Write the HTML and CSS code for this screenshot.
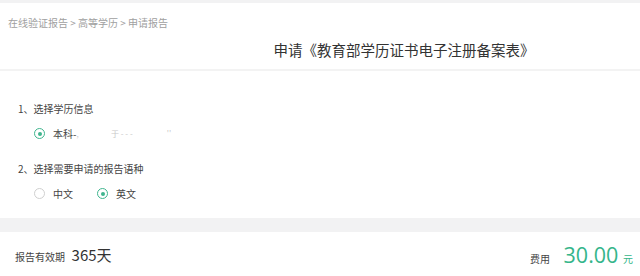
FILE: index.html
```html
<!DOCTYPE html>
<html lang="zh-CN">
<head>
    <meta charset="UTF-8">
    <meta name="viewport" content="width=device-width, initial-scale=1.0">
    <title>申请报告</title>
    <link rel="stylesheet" href="styles.css">
</head>
<body>

<div class="header">
    <div class="crumbs">在线验证报告 &gt; 高等学历 &gt; 申请报告</div>
    <h1 class="title">申请《教育部学历证书电子注册备案表》</h1>
</div>

<div class="main">
    <div class="step">1、选择学历信息</div>
    <div class="options">
        <label class="radio checked"><span class="dot"></span>本科-<span class="blur">,&nbsp;&nbsp;&nbsp;&nbsp;&nbsp;&nbsp;&nbsp;&nbsp;&nbsp;&nbsp;&nbsp;&nbsp;&nbsp;&nbsp;&nbsp;&nbsp;&nbsp;&nbsp;于 - - -&nbsp;&nbsp;&nbsp;&nbsp;&nbsp;&nbsp;&nbsp;&nbsp;&nbsp;&nbsp;&nbsp;&nbsp;&nbsp;&nbsp;&nbsp;&nbsp;&nbsp;&nbsp;&nbsp;''</span></label>
    </div>

    <div class="step">2、选择需要申请的报告语种</div>
    <div class="options">
        <label class="radio"><span class="dot"></span>中文</label>
        <label class="radio checked"><span class="dot"></span>英文</label>
    </div>
</div>

<div class="footer">
    <div class="valid">
        <span class="label">报告有效期</span>
        <span class="days">365天</span>
    </div>
    <div class="price">
        <span class="label">费用</span>
        <span class="amount">30.00</span>
        <span class="unit">元</span>
    </div>
</div>

</body>
</html>
```

FILE: styles.css
```css
body {
    margin: 0;
    background-color: #f2f2f3;
    font-family: "Noto Sans CJK SC", "Noto Sans", sans-serif;
    color: #333;
}

.header {
    margin-top: 3px;
    background-color: #fff;
    height: 66px;
    border-bottom: 2px solid #f3f3f3;
}

.crumbs {
    padding: 12px 0 0 8px;
    font-size: 10px;
    line-height: 16px;
    color: #a0a0a0;
}

.title {
    margin: 7px 0 0;
    font-size: 14.5px;
    font-weight: normal;
    line-height: 24px;
    text-align: center;
    padding-left: 168px;
    color: #333;
}

.main {
    background-color: #fff;
    height: 147px;
    box-sizing: border-box;
    padding: 30px 0 0 18px;
}

.step {
    font-size: 10px;
    line-height: 16px;
    color: #444;
}

.options {
    display: flex;
    gap: 24px;
    padding: 1px 0 0 16px;
    height: 32px;
    box-sizing: border-box;
}

.options + .step {
    margin-top: 12px;
}

.radio {
    display: flex;
    align-items: center;
    font-size: 10px;
    line-height: 14px;
    color: #444;
}

.dot {
    width: 11px;
    height: 11px;
    border: 1px solid #d0d0d0;
    border-radius: 50%;
    margin-right: 8px;
    box-sizing: border-box;
    position: relative;
}

.radio.checked .dot {
    border-color: #3fb58e;
}

.radio.checked .dot::after {
    content: "";
    position: absolute;
    left: 2.5px;
    top: 2.5px;
    width: 4px;
    height: 4px;
    border-radius: 50%;
    background-color: #3fb58e;
}

.blur {
    color: #c8c8c8;
    font-size: 8px;
}

.footer {
    margin-top: 14px;
    background-color: #fff;
    height: 44px;
    display: flex;
    justify-content: space-between;
    align-items: center;
    padding: 0 7px 0 15px;
}

.valid .label,
.price .label {
    font-size: 10px;
    color: #444;
}

.days {
    font-size: 15px;
    margin-left: 3px;
    color: #333;
}

.price .label {
    margin-right: 10px;
}

.amount {
    font-family: "Open Sans", "Noto Sans", sans-serif;
    font-size: 21.5px;
    color: #35b58a;
}

.unit {
    font-size: 10px;
    color: #35b58a;
    margin-left: 1px;
}
```
